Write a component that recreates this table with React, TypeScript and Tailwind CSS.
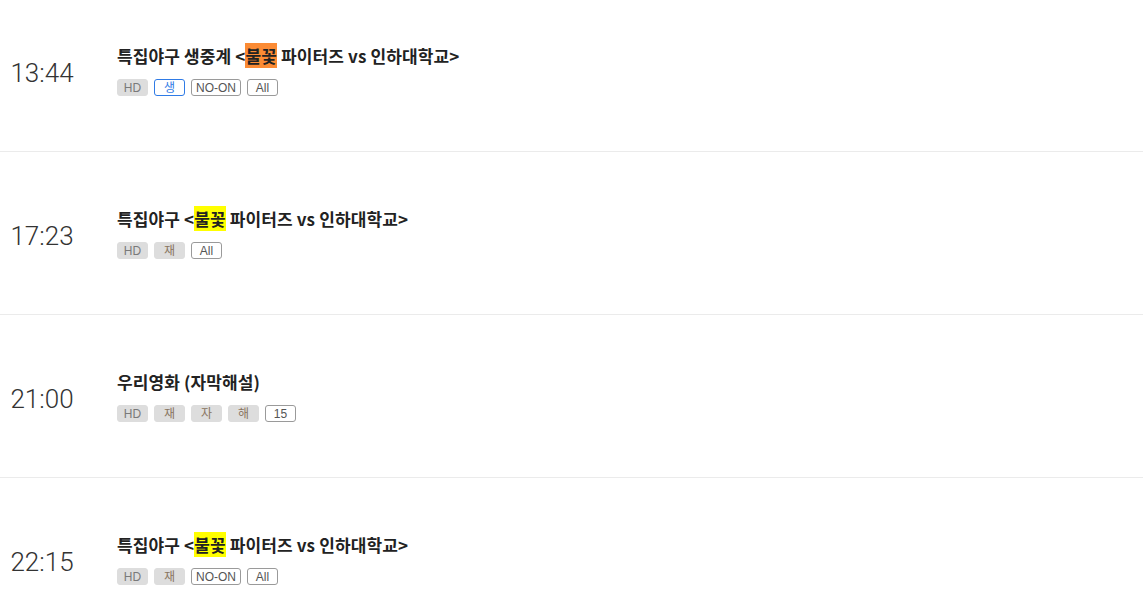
import React from "react";

type Badge = { label: string; kind: "gray" | "grayBrown" | "blue" | "outline" };
type Row = { time: string; title: React.ReactNode; badges: Badge[] };

const Hl = ({ children, color }: { children: React.ReactNode; color: "orange" | "yellow" }) => (
  <span className={color === "orange" ? "bg-[#fb8b34]" : "bg-[#ffff00]"}>{children}</span>
);

const rows: Row[] = [
  {
    time: "13:44",
    title: (
      <>
        특집야구 생중계 &lt;<Hl color="orange">불꽃</Hl> 파이터즈 vs 인하대학교&gt;
      </>
    ),
    badges: [
      { label: "HD", kind: "gray" },
      { label: "생", kind: "blue" },
      { label: "NO-ON", kind: "outline" },
      { label: "All", kind: "outline" },
    ],
  },
  {
    time: "17:23",
    title: (
      <>
        특집야구 &lt;<Hl color="yellow">불꽃</Hl> 파이터즈 vs 인하대학교&gt;
      </>
    ),
    badges: [
      { label: "HD", kind: "gray" },
      { label: "재", kind: "grayBrown" },
      { label: "All", kind: "outline" },
    ],
  },
  {
    time: "21:00",
    title: <>우리영화 (자막해설)</>,
    badges: [
      { label: "HD", kind: "gray" },
      { label: "재", kind: "grayBrown" },
      { label: "자", kind: "grayBrown" },
      { label: "해", kind: "grayBrown" },
      { label: "15", kind: "outline" },
    ],
  },
  {
    time: "22:15",
    title: (
      <>
        특집야구 &lt;<Hl color="yellow">불꽃</Hl> 파이터즈 vs 인하대학교&gt;
      </>
    ),
    badges: [
      { label: "HD", kind: "gray" },
      { label: "재", kind: "grayBrown" },
      { label: "NO-ON", kind: "outline" },
      { label: "All", kind: "outline" },
    ],
  },
];

const badgeClass: Record<Badge["kind"], string> = {
  gray: "bg-[#dddddd] border-[#dddddd] text-[#7a7a7a]",
  grayBrown: "bg-[#dddddd] border-[#dddddd] text-[#8a7560]",
  blue: "bg-white border-[#2f7be6] text-[#2f7be6]",
  outline: "bg-white border-[#9a9a9a] text-[#555555]",
};

export default function App() {
  return (
    <div className="w-full bg-white overflow-hidden h-[603px]" style={{ fontFamily: "'Noto Sans CJK KR', 'Noto Sans', sans-serif" }}>
      <div className="-mt-[11px]">
        {rows.map((r, i) => (
          <div key={i} className="h-[163px] flex items-center border-b border-[#ebebeb]">
            <div className="w-[84px] text-center text-[26px] font-light text-[#333333] leading-none pt-[5px] font-['Roboto',sans-serif]">
              {r.time}
            </div>
            <div className="ml-[33px] flex flex-col">
              <div className="text-[17px] font-bold text-[#222222] leading-[23px] tracking-[0.12px]">{r.title}</div>
              <div className="mt-[12px] flex gap-[6px]">
                {r.badges.map((b, j) => (
                  <span
                    key={j}
                    className={`min-w-[31px] h-[17px] px-[4px] border rounded-[3px] flex items-center justify-center text-[12px] leading-none font-['Liberation_Sans','Noto_Sans_CJK_KR',sans-serif] ${badgeClass[b.kind]}`}
                  >
                    {b.label}
                  </span>
                ))}
              </div>
            </div>
          </div>
        ))}
      </div>
    </div>
  );
}
